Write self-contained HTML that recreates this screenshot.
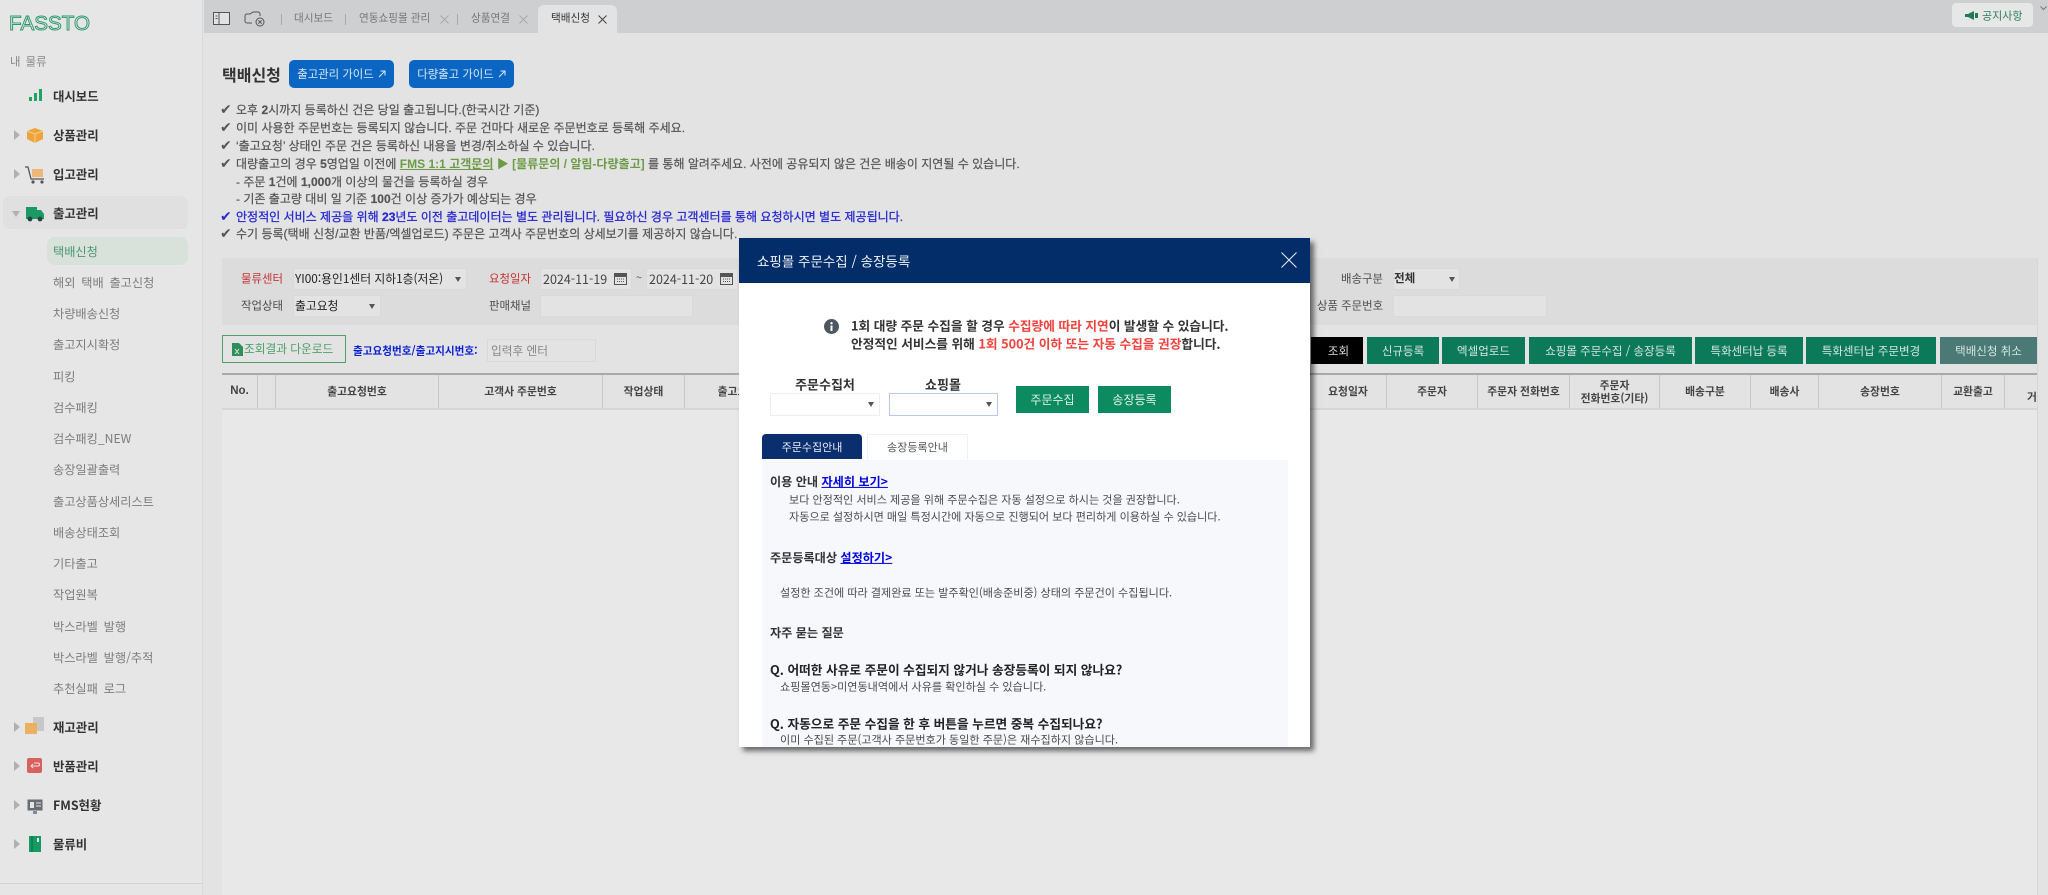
<!DOCTYPE html>
<html lang="ko"><head><meta charset="utf-8"><title>택배신청</title>
<style>
*{box-sizing:border-box}
html,body{margin:0;padding:0;width:2048px;height:895px;overflow:hidden;background:#e3e3e3}
body{position:relative;font-family:"Noto Sans CJK KR","Liberation Sans",sans-serif;color:#333;filter:blur(.3px)}
.a{position:absolute}
.t{position:absolute;white-space:nowrap;line-height:1;transform:translateY(-50%)}
.c{position:absolute;white-space:nowrap;line-height:1;transform:translate(-50%,-50%);text-align:center}
.m{font-size:12.4px;font-weight:700;color:#333;left:53px}
.s{font-size:12.2px;color:#7d7d7d;left:53px;word-spacing:2.4px}
.n{font-family:"Liberation Sans","Noto Sans CJK KR",sans-serif;font-size:12.03px;color:#555;left:236px;-webkit-text-stroke:.2px #555}
.k{font-family:"DejaVu Sans",sans-serif;font-size:14px;color:#555;left:220px}
.l{font-size:11.4px;color:#4d4d4d}
.f{position:absolute;background:#e3e3e3;border:1px solid #d9d9d9}
.v{position:absolute;white-space:nowrap;line-height:1;transform:translateY(-50%);font-size:11.8px;color:#222}
.d{position:absolute;white-space:nowrap;line-height:1;transform:translateY(-50%);font-size:12.5px;color:#444}
.ar{position:absolute;width:0;height:0;border-left:3px solid transparent;border-right:3px solid transparent;border-top:5px solid #555}
.b{position:absolute;top:337px;height:27px;background:#0c7a58;color:#d5e6df;font-size:11.5px;display:flex;align-items:center;justify-content:center;white-space:nowrap}
.g{position:absolute;top:60px;width:105px;height:28px;background:#0a66c2;border-radius:5px;color:#d9e8f6;font-size:11.4px;display:flex;align-items:center;justify-content:center;gap:4px}
.th{position:absolute;top:375px;height:33px;border-right:1px solid #c8c8c8;font-size:10.8px;font-weight:700;color:#444;display:flex;align-items:center;justify-content:center;text-align:center;line-height:1.2;white-space:nowrap}
.sb{position:absolute;width:0;height:0;border-top:5px solid transparent;border-bottom:5px solid transparent;border-left:6px solid #b0b0b0;left:14px}
.mb{font-size:11.08px;color:#4a4a4a}
.mh{font-size:12.15px;font-weight:700;color:#333}
.q{font-size:12.7px;font-weight:700;color:#222;left:770px}
a{color:#0000e0;text-decoration:underline}
</style></head><body>

<!-- sidebar -->
<div class="a" style="left:0;top:0;width:203px;height:895px;background:#e6e6e6;border-right:1px solid #dadada"></div>
<svg class="a" style="left:8px;top:13px" width="84" height="20"><text x="1" y="17" font-family="Liberation Sans" font-size="20" fill="none" stroke="#2c9a6e" stroke-width=".95" textLength="81" lengthAdjust="spacingAndGlyphs">FASSTO</text></svg>
<div class="t" style="left:10px;top:62px;font-size:11.4px;color:#888;word-spacing:2px">내 물류</div>

<div class="a" style="left:3px;top:196px;width:185px;height:33px;background:#e0e0e0;border-radius:7px"></div>
<div class="a" style="left:47px;top:237px;width:141px;height:28px;background:#d9e1db;border-radius:8px"></div>

<svg class="a" style="left:28px;top:88px" width="14" height="14"><rect x="1" y="9" width="3" height="4" fill="#21a366"/><rect x="6" y="5" width="3" height="8" fill="#21a366"/><rect x="11" y="1" width="3" height="12" fill="#21a366"/></svg>
<div class="t m" style="top:96px">대시보드</div>

<div class="sb" style="top:130px"></div>
<svg class="a" style="left:26px;top:127px" width="18" height="16"><path d="M1 4 9 1l8 3v8l-8 4-8-4z" fill="#eda43a"/><path d="M1 4l8 3 8-3M9 7v9" stroke="#f6cf8d" stroke-width="1" fill="none"/></svg>
<div class="t m" style="top:135px">상품관리</div>

<div class="sb" style="top:169px"></div>
<svg class="a" style="left:24px;top:166px" width="21" height="18"><path d="M1 1h3l3 12h13" stroke="#555" stroke-width="1.3" fill="none"/><rect x="8" y="3" width="11" height="8" fill="#eeb777"/><circle cx="9" cy="16" r="1.6" fill="#555"/><circle cx="18" cy="16" r="1.6" fill="#555"/></svg>
<div class="t m" style="top:174px">입고관리</div>

<div class="a" style="left:12px;top:211px;width:0;height:0;border-left:4.5px solid transparent;border-right:4.5px solid transparent;border-top:6px solid #b0b0b0"></div>
<svg class="a" style="left:25px;top:206px" width="20" height="16"><path d="M1 1h11v12H1z" fill="#1a9a62"/><path d="M12 4h4l3 4v5h-7z" fill="#1a9a62"/><circle cx="5" cy="13" r="2.4" fill="#244"/><circle cx="15" cy="13" r="2.4" fill="#244"/></svg>
<div class="t m" style="top:213px">출고관리</div>

<div class="t s" style="top:251px;color:#4a9676">택배신청</div>
<div class="t s" style="top:282px">해외 택배 출고신청</div>
<div class="t s" style="top:313px">차량배송신청</div>
<div class="t s" style="top:344px">출고지시확정</div>
<div class="t s" style="top:376px">피킹</div>
<div class="t s" style="top:407px">검수패킹</div>
<div class="t s" style="top:438px">검수패킹_NEW</div>
<div class="t s" style="top:469px">송장일괄출력</div>
<div class="t s" style="top:501px">출고상품상세리스트</div>
<div class="t s" style="top:532px">배송상태조회</div>
<div class="t s" style="top:563px">기타출고</div>
<div class="t s" style="top:594px">작업원복</div>
<div class="t s" style="top:626px">박스라벨 발행</div>
<div class="t s" style="top:657px">박스라벨 발행/추적</div>
<div class="t s" style="top:688px">추천실패 로그</div>

<div class="sb" style="top:722px"></div>
<svg class="a" style="left:24px;top:716px" width="21" height="20"><rect x="9" y="1" width="11" height="14" fill="#c8c8c8"/><rect x="1" y="7" width="12" height="11" fill="#e9b161"/></svg>
<div class="t m" style="top:727px">재고관리</div>

<div class="sb" style="top:761px"></div>
<svg class="a" style="left:27px;top:758px" width="16" height="16"><rect width="15" height="15" rx="2" fill="#d8605f"/><path d="M4 8h7a1.5 1.5 0 0 0 0-3H7M4 8l2-2M4 8l2 2" stroke="#f6dede" stroke-width="1.1" fill="none"/></svg>
<div class="t m" style="top:766px">반품관리</div>

<div class="sb" style="top:800px"></div>
<svg class="a" style="left:27px;top:799px" width="16" height="15"><rect x=".5" y=".5" width="15" height="11" fill="#666e74"/><rect x="3" y="3" width="4" height="6" fill="#e6e6e6"/><path d="M9 4h5M9 7h5" stroke="#e6e6e6"/><rect x="6" y="12" width="4" height="3" fill="#889"/></svg>
<div class="t m" style="top:805px">FMS현황</div>

<div class="sb" style="top:839px"></div>
<svg class="a" style="left:29px;top:836px" width="12" height="16"><rect width="12" height="16" fill="#149a62"/><path d="M3 0v16" stroke="#0a6d44"/><rect x="8" y="2" width="2" height="4" fill="#e6e6e6"/></svg>
<div class="t m" style="top:844px">물류비</div>
<div class="a" style="left:0;top:883px;width:203px;height:1px;background:#d2d2d2"></div>

<!-- tab strip -->
<div class="a" style="left:204px;top:0;width:1844px;height:33px;background:#cdcfd0"></div>
<svg class="a" style="left:213px;top:12px" width="18" height="14"><rect x=".5" y=".5" width="16" height="12" fill="#e2e2e2" stroke="#555"/><path d="M6 1v11" stroke="#555"/><path d="M2.5 4h2M2.5 6.5h2" stroke="#555"/></svg>
<svg class="a" style="left:244px;top:10px" width="22" height="18"><path d="M8 13H3a2 2 0 0 1-2-2V6a2 2 0 0 1 2-2h3l3-2h5a2 2 0 0 1 2 2v2" stroke="#555" fill="none"/><circle cx="16" cy="12" r="4" stroke="#555" fill="none"/><path d="M14.3 10.3l3.4 3.4M17.7 10.3l-3.4 3.4" stroke="#555"/></svg>
<div class="a" style="left:281px;top:14px;width:1px;height:11px;background:#aaa"></div>
<div class="t" style="left:294px;top:19px;font-size:10.6px;color:#777">대시보드</div>
<div class="a" style="left:345px;top:14px;width:1px;height:11px;background:#aaa"></div>
<div class="t" style="left:359px;top:19px;font-size:10.6px;color:#777">연동쇼핑몰 관리</div>
<svg class="a" style="left:440px;top:15px" width="9" height="9"><path d="M.5.5l8 8M8.5.5l-8 8" stroke="#aaa"/></svg>
<div class="a" style="left:457px;top:14px;width:1px;height:11px;background:#aaa"></div>
<div class="t" style="left:471px;top:19px;font-size:10.6px;color:#777">상품연결</div>
<svg class="a" style="left:519px;top:15px" width="9" height="9"><path d="M.5.5l8 8M8.5.5l-8 8" stroke="#aaa"/></svg>
<div class="a" style="left:538px;top:5px;width:79px;height:28px;background:#e3e3e3;border-radius:6px 6px 0 0"></div>
<div class="t" style="left:551px;top:19px;font-size:10.6px;color:#333">택배신청</div>
<svg class="a" style="left:598px;top:15px" width="9" height="9"><path d="M.5.5l8 8M8.5.5l-8 8" stroke="#444"/></svg>
<div class="a" style="left:1952px;top:3px;width:81px;height:24px;background:#e6e8e7;border-radius:4px"></div>
<svg class="a" style="left:1965px;top:11px" width="14" height="9"><path d="M0 3h3l6-3v9L3 6H0z" fill="#237a55"/><rect x="10" y="2" width="3" height="5" fill="#237a55"/></svg>
<div class="t" style="left:1982px;top:16px;font-size:11px;color:#2f7a5a">공지사항</div>
<svg class="a" style="left:2040px;top:6px" width="7" height="5"><path d="M.5.5 3.5 3.5 6.5.5" stroke="#777" fill="none"/></svg>

<!-- title -->
<div class="t" style="left:222px;top:74px;font-size:16px;font-weight:700;color:#333">택배신청</div>
<div class="g" style="left:289px">출고관리 가이드 <svg width="8" height="8"><path d="M1 7 7 1M2.5 1H7v4.5" stroke="#d9e8f6" fill="none"/></svg></div>
<div class="g" style="left:409px">다량출고 가이드 <svg width="8" height="8"><path d="M1 7 7 1M2.5 1H7v4.5" stroke="#d9e8f6" fill="none"/></svg></div>

<!-- notes -->
<div class="t k" style="top:110px">✔</div><div class="t n" style="top:110px">오후 <b>2</b>시까지 등록하신 건은 당일 출고됩니다.(한국시간 기준)</div>
<div class="t k" style="top:128px">✔</div><div class="t n" style="top:128px">이미 사용한 주문번호는 등록되지 않습니다. 주문 건마다 새로운 주문번호로 등록해 주세요.</div>
<div class="t k" style="top:146px">✔</div><div class="t n" style="top:146px">‘출고요청’ 상태인 주문 건은 등록하신 내용을 변경/취소하실 수 있습니다.</div>
<div class="t k" style="top:164px">✔</div><div class="t n" style="top:164px">대량출고의 경우 <b>5</b>영업일 이전에 <b style="color:#6d9b45;-webkit-text-stroke:0;text-decoration:underline">FMS 1:1 고객문의</b> <b style="color:#6d9b45;-webkit-text-stroke:0">▶ [물류문의 / 알림-다량출고]</b> 를 통해 알려주세요. 사전에 공유되지 않은 건은 배송이 지연될 수 있습니다.</div>
<div class="t n" style="top:182px">- 주문 <b>1</b>건에 <b>1,000</b>개 이상의 물건을 등록하실 경우</div>
<div class="t n" style="top:199px">- 기존 출고량 대비 일 기준 <b>100</b>건 이상 증가가 예상되는 경우</div>
<div class="t k" style="top:217px;color:#2b2bd0">✔</div><div class="t n" style="top:217px;color:#2b2bd0;-webkit-text-stroke:.3px #2b2bd0">안정적인 서비스 제공을 위해 <b>23</b>년도 이전 출고데이터는 별도 관리됩니다. 필요하신 경우 고객센터를 통해 요청하시면 별도 제공됩니다.</div>
<div class="t k" style="top:234px">✔</div><div class="t n" style="top:234px">수기 등록(택배 신청/교환 반품/엑셀업로드) 주문은 고객사 주문번호의 상세보기를 제공하지 않습니다.</div>

<!-- filters -->
<div class="a" style="left:222px;top:258px;width:1815px;height:67px;background:#dcdcdc"></div>
<div class="t l" style="left:241px;top:279px;color:#c23434">물류센터</div>
<div class="f" style="left:293px;top:268px;width:174px;height:22px"></div>
<div class="v" style="left:295px;top:279px">YI00:용인1센터 지하1층(저온)</div><div class="ar" style="left:455px;top:277px"></div>
<div class="t l" style="left:489px;top:279px;color:#c23434">요청일자</div>
<div class="f" style="left:540px;top:268px;width:92px;height:22px"></div>
<div class="d" style="left:543px;top:279px">2024-11-19</div>
<svg class="a" style="left:614px;top:272px" width="13" height="13"><rect x=".5" y="1.5" width="12" height="11" fill="none" stroke="#555"/><rect x="1" y="2" width="11" height="3" fill="#555"/><path d="M3 7h7M3 9.5h7" stroke="#555" stroke-dasharray="1 1"/></svg>
<div class="t" style="left:636px;top:278px;font-size:11px;color:#555">~</div>
<div class="f" style="left:646px;top:268px;width:92px;height:22px"></div>
<div class="d" style="left:649px;top:279px">2024-11-20</div>
<svg class="a" style="left:720px;top:272px" width="13" height="13"><rect x=".5" y="1.5" width="12" height="11" fill="none" stroke="#555"/><rect x="1" y="2" width="11" height="3" fill="#555"/><path d="M3 7h7M3 9.5h7" stroke="#555" stroke-dasharray="1 1"/></svg>
<div class="t l" style="left:241px;top:306px">작업상태</div>
<div class="f" style="left:293px;top:295px;width:88px;height:22px"></div>
<div class="v" style="left:295px;top:306px">출고요청</div><div class="ar" style="left:369px;top:304px"></div>
<div class="t l" style="left:489px;top:306px">판매채널</div>
<div class="f" style="left:540px;top:295px;width:153px;height:22px"></div>
<div class="t l" style="left:1341px;top:279px">배송구분</div>
<div class="f" style="left:1393px;top:268px;width:67px;height:22px"></div>
<div class="t" style="left:1394px;top:279px;font-size:11.6px;font-weight:700;color:#333">전체</div><div class="ar" style="left:1449px;top:277px"></div>
<div class="t l" style="left:1317px;top:306px">상품 주문번호</div>
<div class="f" style="left:1393px;top:295px;width:154px;height:22px"></div>

<!-- action row -->
<div class="a" style="left:222px;top:335px;width:124px;height:28px;border:1px solid #4f9f6c"></div>
<svg class="a" style="left:232px;top:343px" width="11" height="13"><path d="M0 0h7l4 4v9H0z" fill="#2f8f5b"/><path d="M3 6l4 5M7 6l-4 5" stroke="#e3e3e3"/></svg>
<div class="t" style="left:244px;top:349px;font-size:11.7px;color:#4f9f6c">조회결과 다운로드</div>
<div class="t" style="left:353px;top:352px;font-size:10.6px;font-weight:700;color:#0a1fd0">출고요청번호/출고지시번호:</div>
<div class="f" style="left:487px;top:339px;width:109px;height:23px"></div>
<div class="t" style="left:491px;top:351px;font-size:11.7px;color:#888">입력후 엔터</div>

<div class="a" style="left:1311px;top:337px;width:52px;height:27px;background:#000;color:#ddd;font-size:11.5px;display:flex;align-items:center;justify-content:center;padding-left:3px">조회</div>
<div class="b" style="left:1367px;width:72px">신규등록</div>
<div class="b" style="left:1442px;width:83px">엑셀업로드</div>
<div class="b" style="left:1529px;width:163px">쇼핑몰 주문수집 / 송장등록</div>
<div class="b" style="left:1695px;width:108px">특화센터납 등록</div>
<div class="b" style="left:1806px;width:130px">특화센터납 주문변경</div>
<div class="b" style="left:1940px;width:97px;background:#4b7a76">택배신청 취소</div>

<!-- table -->
<div class="a" style="left:222px;top:373px;width:1815px;height:2px;background:#a9a9a9"></div>
<div class="a" style="left:222px;top:408px;width:1815px;height:2px;background:#d6d6d6"></div>
<div class="a" style="left:222px;top:410px;width:1815px;height:485px;background:#e8e8e8"></div>
<div class="th" style="left:222px;width:36px;font-family:'Liberation Sans',sans-serif;font-size:11.5px">No.</div>
<div class="th" style="left:258px;width:18px"></div>
<div class="th" style="left:276px;width:163px">출고요청번호</div>
<div class="th" style="left:439px;width:164px">고객사 주문번호</div>
<div class="th" style="left:603px;width:82px">작업상태</div>
<div class="th" style="left:687px;width:102px">출고요청</div>
<div class="th" style="left:1310px;width:77px">요청일자</div>
<div class="th" style="left:1387px;width:91px">주문자</div>
<div class="th" style="left:1478px;width:92px">주문자 전화번호</div>
<div class="th" style="left:1570px;width:90px">주문자<br>전화번호(기타)</div>
<div class="th" style="left:1660px;width:91px">배송구분</div>
<div class="th" style="left:1751px;width:68px">배송사</div>
<div class="th" style="left:1819px;width:123px">송장번호</div>
<div class="th" style="left:1942px;width:63px">교환출고</div>
<div class="t" style="left:2027px;top:397px;font-size:10.8px;font-weight:700;color:#444;width:10px;overflow:hidden">거래</div>
<div class="a" style="left:2037px;top:258px;width:1px;height:637px;background:#d6d6d6"></div>

<!-- modal -->
<div class="a" style="left:739px;top:238px;width:571px;height:509px;background:#fff;box-shadow:4px 4px 5px rgba(0,0,0,.55);overflow:hidden">
  <div class="a" style="left:0;top:0;width:571px;height:45px;background:#032d69"></div>
</div>
<div class="t" style="left:757px;top:261px;font-size:13.5px;color:#f0f3f8">쇼핑몰 주문수집 / 송장등록</div>
<svg class="a" style="left:1281px;top:252px" width="16" height="16"><path d="M.5.5l15 15M15.5.5l-15 15" stroke="#dfe6f0" stroke-width="1.1"/></svg>

<svg class="a" style="left:824px;top:319px" width="15" height="15"><circle cx="7.5" cy="7.5" r="7.5" fill="#4d5761"/><rect x="6.5" y="6.5" width="2" height="5.5" fill="#fff"/><circle cx="7.5" cy="4.2" r="1.2" fill="#fff"/></svg>
<div class="t" style="left:851px;top:326px;font-size:12.7px;font-weight:700;color:#333">1회 대량 주문 수집을 할 경우 <span style="color:#f0413c">수집량에 따라 지연</span>이 발생할 수 있습니다.</div>
<div class="t" style="left:851px;top:344px;font-size:12.7px;font-weight:700;color:#333">안정적인 서비스를 위해 <span style="color:#f0413c">1회 500건 이하 또는 자동 수집을 권장</span>합니다.</div>

<div class="c" style="left:825px;top:384px;font-size:13px;font-weight:700;color:#333">주문수집처</div>
<div class="c" style="left:943px;top:384px;font-size:13px;font-weight:700;color:#333">쇼핑몰</div>
<div class="a" style="left:770px;top:393px;width:110px;height:23px;background:#fff;border:1px solid #eee"></div>
<div class="ar" style="left:868px;top:402px"></div>
<div class="a" style="left:889px;top:393px;width:109px;height:23px;background:#fff;border:1px solid #b7c8ea"></div>
<div class="ar" style="left:986px;top:402px"></div>
<div class="a" style="left:1016px;top:386px;width:73px;height:27px;background:#0c8a60;color:#e4f2ec;font-size:12px;display:flex;align-items:center;justify-content:center">주문수집</div>
<div class="a" style="left:1098px;top:386px;width:73px;height:27px;background:#0c8a60;color:#e4f2ec;font-size:12px;display:flex;align-items:center;justify-content:center">송장등록</div>

<div class="a" style="left:762px;top:434px;width:100px;height:25px;background:#0b2f6e;border-radius:4px 4px 0 0;color:#e8edf5;font-size:11px;display:flex;align-items:center;justify-content:center">주문수집안내</div>
<div class="a" style="left:867px;top:434px;width:101px;height:25px;background:#fff;border:1px solid #eef0f3;border-bottom:0;color:#555;font-size:11px;display:flex;align-items:center;justify-content:center">송장등록안내</div>
<div class="a" style="left:762px;top:460px;width:526px;height:287px;background:#f6f8fb"></div>

<div class="t mh" style="left:770px;top:482px">이용 안내 <a>자세히 보기&gt;</a></div>
<div class="t mb" style="left:789px;top:500px">보다 안정적인 서비스 제공을 위해 주문수집은 자동 설정으로 하시는 것을 권장합니다.</div>
<div class="t mb" style="left:789px;top:517px">자동으로 설정하시면 매일 특정시간에 자동으로 진행되어 보다 편리하게 이용하실 수 있습니다.</div>
<div class="t mh" style="left:770px;top:558px">주문등록대상 <a>설정하기&gt;</a></div>
<div class="t mb" style="left:780px;top:593px">설정한 조건에 따라 결제완료 또는 발주확인(배송준비중) 상태의 주문건이 수집됩니다.</div>
<div class="t mh" style="left:770px;top:633px">자주 묻는 질문</div>
<div class="t q" style="top:670px">Q. 어떠한 사유로 주문이 수집되지 않거나 송장등록이 되지 않나요?</div>
<div class="t mb" style="left:780px;top:687px">쇼핑몰연동&gt;미연동내역에서 사유를 확인하실 수 있습니다.</div>
<div class="t q" style="top:724px">Q. 자동으로 주문 수집을 한 후 버튼을 누르면 중복 수집되나요?</div>
<div class="t mb" style="left:780px;top:740px">이미 수집된 주문(고객사 주문번호가 동일한 주문)은 재수집하지 않습니다.</div>
</body></html>
